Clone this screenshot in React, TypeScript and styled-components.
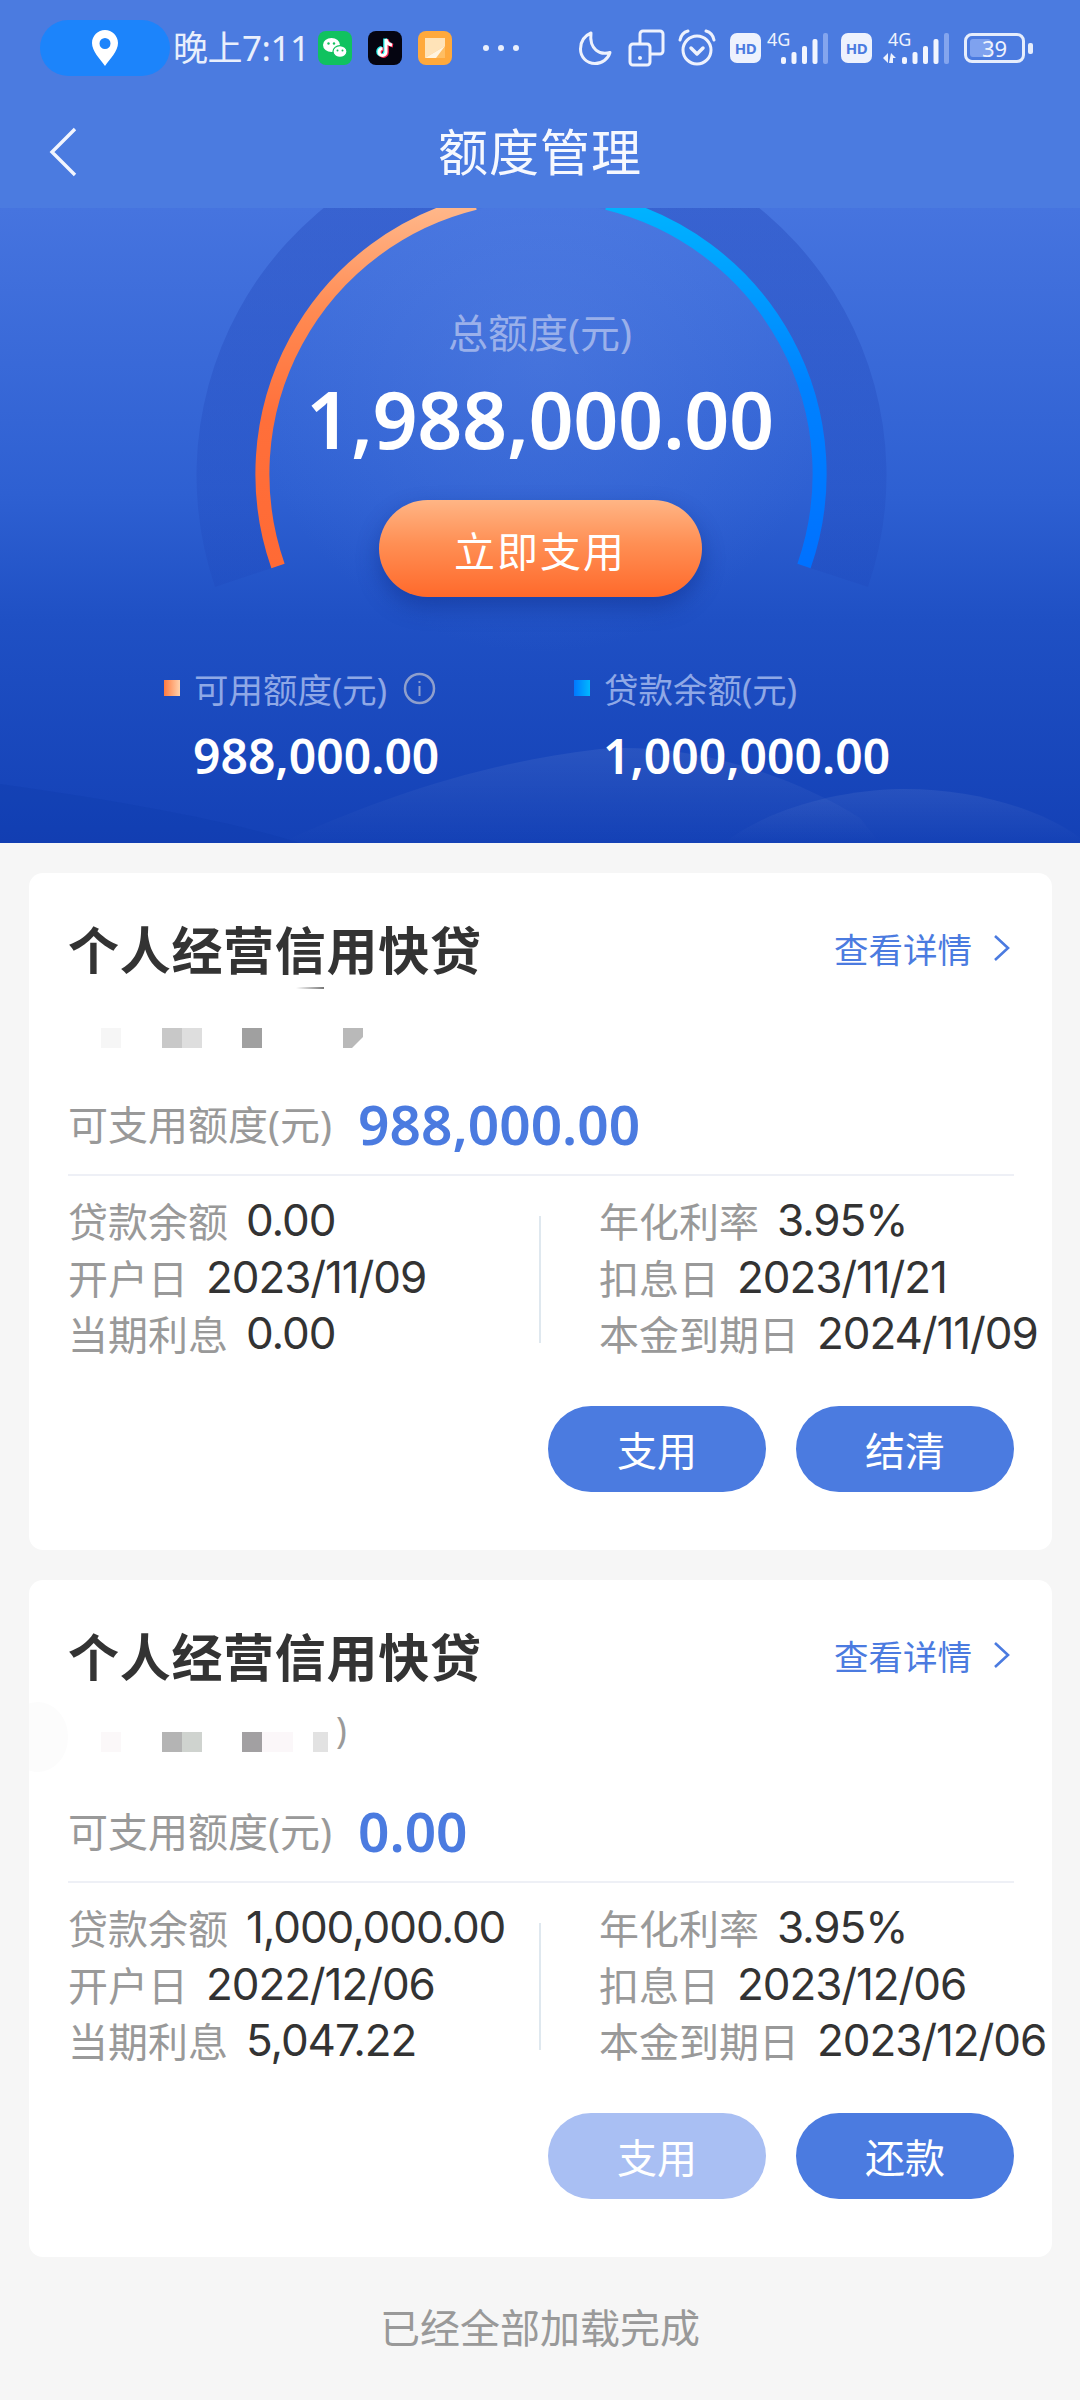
import React from 'react';
import styled, { createGlobalStyle } from 'styled-components';

const Global = createGlobalStyle`
	html, body {
		margin: 0;
		padding: 0;
		background: #f6f6f6;
	}
	body {
		font-family: "Noto Sans", "Noto Sans CJK SC", sans-serif;
	}
`;

const Page = styled.div`
	width: 1080px;
	min-height: 2400px;
	background: #f6f6f6;
	overflow: hidden;
`;

const Header = styled.header`
	height: 208px;
	background: #4b7be0;
	position: relative;
	z-index: 1;
`;

const StatusBar = styled.div`
	height: 96px;
	padding: 20px 47px 20px 40px;
	box-sizing: border-box;
	display: flex;
	align-items: center;
`;

const LocationPill = styled.div`
	width: 130px;
	height: 56px;
	border-radius: 28px;
	background: #1c84fb;
	display: flex;
	align-items: center;
	justify-content: center;
	margin-right: 3px;
`;

const Time = styled.span`
	width: 145px;
	font-size: 35px;
	line-height: 56px;
	color: #e9effc;
	white-space: nowrap;
	letter-spacing: -0.5px;
`;

const AppIcon = styled.svg`
	width: 34px;
	height: 34px;
	margin-right: 16px;
	flex: none;
`;

const Dots = styled.svg`
	width: 40px;
	height: 10px;
	margin-left: 13px;
`;

const StatusRight = styled.div`
	margin-left: auto;
	display: flex;
	align-items: center;
`;

const StatusIcon = styled.svg<{ $gap: number }>`
	flex: none;
	margin-right: ${(p) => p.$gap}px;
`;

const SignalIcon = styled.svg<{ $gap: number }>`
	flex: none;
	margin-top: -6px;
	margin-right: ${(p) => p.$gap}px;
`;

const HdBadge = styled.span`
	width: 31px;
	height: 30px;
	border-radius: 7px;
	background: #eef2fd;
	color: #4b7be0;
	font-size: 15px;
	font-weight: 700;
	display: flex;
	align-items: center;
	justify-content: center;
	letter-spacing: -0.5px;
	margin-right: 5px;
`;

const Battery = styled.div`
	width: 61px;
	height: 30px;
	border: 3px solid #e6edfc;
	border-radius: 8px;
	box-sizing: border-box;
	position: relative;
	display: flex;
	align-items: center;
	justify-content: center;
	color: #eef2fd;
	font-size: 22px;
	line-height: 24px;
	margin-right: 3px;
	&::before {
		content: '';
		position: absolute;
		left: 3px;
		top: 3px;
		bottom: 3px;
		width: 21px;
		border-radius: 3px;
		background: #7fa2ef;
	}
`;

const BatteryText = styled.span`
	position: relative;
`;

const BatteryNub = styled.i`
	width: 5px;
	height: 11px;
	border-radius: 2px;
	background: #e6edfc;
`;

const NavBar = styled.div`
	height: 112px;
	display: grid;
	grid-template-columns: 1fr auto 1fr;
	align-items: center;
	padding-left: 49px;
`;

const NavTitle = styled.h1`
	margin: 0 0 0 -49px;
	font-size: 50px;
	font-weight: 400;
	line-height: 60px;
	color: #f6f8fe;
	letter-spacing: 1px;
`;

const Hero = styled.section`
	height: 635px;
	position: relative;
	overflow: hidden;
	background: linear-gradient(180deg, #4674df 0%, #2e60d2 45%, #1f50c4 65%, #1441b6 100%);
	padding-top: 100px;
	box-sizing: border-box;
`;

const GaugeArt = styled.svg`
	position: absolute;
	left: 0;
	top: 0;
`;

const HeroBody = styled.div`
	position: relative;
	display: flex;
	flex-direction: column;
	align-items: center;
`;

const TotalLabel = styled.div`
	font-size: 40px;
	line-height: 50px;
	color: #9ab0ea;
`;

const TotalAmount = styled.div`
	margin-top: 16px;
	font-size: 79px;
	font-weight: 600;
	line-height: 90px;
	color: #fff;
	letter-spacing: -0.4px;
`;

const UseButton = styled.div`
	margin-top: 36px;
	width: 323px;
	height: 97px;
	border-radius: 49px;
	background: linear-gradient(180deg, #ffb585 0%, #ff8f54 45%, #ff692b 100%);
	box-shadow: 0 10px 22px rgba(12, 40, 130, 0.45);
	color: #fff;
	font-size: 41px;
	letter-spacing: 2px;
	display: flex;
	align-items: center;
	justify-content: center;
`;

const Legend = styled.div`
	align-self: stretch;
	margin-top: 69px;
	padding-left: 164px;
	display: grid;
	grid-template-columns: 410px 1fr;
`;

const LegendItem = styled.div`
	display: flex;
	flex-direction: column;
`;

const LegendHead = styled.div`
	display: flex;
	align-items: center;
	height: 44px;
	font-size: 34.500px;
	color: #8fa8e6;
`;

const LegendSwatch = styled.i<{ $from: string; $to: string }>`
	width: 16px;
	height: 16px;
	margin-right: 14px;
	background: linear-gradient(90deg, ${(p) => p.$from}, ${(p) => p.$to});
`;

const InfoIcon = styled.svg`
	margin-left: 16px;
`;

const LegendValue = styled.div`
	margin-top: 16px;
	padding-left: 29px;
	font-size: 48px;
	font-weight: 600;
	line-height: 60px;
	color: #fff;
`;

const CardList = styled.main`
	padding: 30px 28px 0 29px;
	display: flex;
	flex-direction: column;
	gap: 30px;
`;

const Card = styled.article`
	background: #fff;
	border-radius: 14px;
	padding: 45px 38px 58px 39px;
	overflow: hidden;
`;

const CardHead = styled.div`
	display: flex;
	align-items: center;
	justify-content: space-between;
	height: 60px;
`;

const CardTitle = styled.h2`
	margin: 0;
	font-size: 51px;
	font-weight: 700;
	color: #333;
	letter-spacing: 0.7px;
`;

const DetailLink = styled.a`
	display: flex;
	align-items: center;
	gap: 21px;
	padding-right: 3px;
	font-size: 34.500px;
	color: #4b7be0;
`;

const Mosaic = styled.div<{ $lift?: boolean }>`
	position: relative;
	margin-top: 50px;
	height: 20px;
	display: flex;
	${(p) => (p.$lift ? 'transform: translateY(-3px);' : '')}
`;

const Patch = styled.i<{ $w: number; $left: number; $bg: string; $notch?: boolean }>`
	width: ${(p) => p.$w}px;
	height: 20px;
	margin-left: ${(p) => p.$left}px;
	background: ${(p) => p.$bg};
	${(p) => (p.$notch ? 'clip-path: polygon(0 0, 100% 0, 100% 45%, 45% 100%, 0 100%);' : '')}
`;

const MosaicSliver = styled.i`
	position: absolute;
	left: 228px;
	top: -41px;
	width: 28px;
	height: 2px;
	background: linear-gradient(90deg, #fff, #777);
`;

const MosaicSmudge = styled.i`
	position: absolute;
	left: -60px;
	top: -30px;
	width: 60px;
	height: 70px;
	border-radius: 50%;
	background: #fcfcfc;
`;

const MosaicParen = styled.span`
	position: absolute;
	left: 268px;
	top: -24px;
	font-size: 36px;
	line-height: 44px;
	color: #9a9a9a;
`;

const LimitRow = styled.div`
	margin-top: 45px;
	height: 60px;
	display: flex;
	align-items: center;
	gap: 26px;
`;

const LimitLabel = styled.span`
	font-size: 40px;
	color: #999;
`;

const LimitValue = styled.span`
	font-size: 55px;
	font-weight: 600;
	color: #4b7be0;
`;

const Divider = styled.div`
	margin-top: 21px;
	height: 2px;
	background: #eef0f6;
`;

const InfoGrid = styled.div`
	margin-top: 16px;
	display: flex;
	height: 170px;
`;

const InfoColumn = styled.div<{ $width: number }>`
	width: ${(p) => p.$width}px;
	flex: none;
	white-space: nowrap;
`;

const VRule = styled.div`
	width: 2px;
	height: 127px;
	margin: 24px 58px 0 0;
	background: #dfe8ef;
	flex: none;
`;

const InfoRow = styled.div`
	height: 56.500px;
	display: flex;
	align-items: center;
	gap: 18px;
`;

const InfoLabel = styled.span`
	font-size: 40px;
	color: #999;
`;

const InfoValue = styled.span`
	font-family: Inter, "Noto Sans", sans-serif;
	font-size: 44px;
	letter-spacing: -1.100px;
	color: #333;
`;

const ActionRow = styled.div`
	margin-top: 44px;
	display: flex;
	justify-content: flex-end;
	gap: 30px;
`;

const ActionButton = styled.div<{ $muted?: boolean }>`
	width: 218px;
	height: 86px;
	border-radius: 43px;
	background: ${(p) => (p.$muted ? '#a9bff3' : '#4b7be0')};
	color: #fff;
	font-size: 40px;
	display: flex;
	align-items: center;
	justify-content: center;
`;

const Footer = styled.div`
	padding-top: 41px;
	font-size: 40px;
	line-height: 60px;
	color: #999;
	text-align: center;
`;

function Signal({ arrows }: { arrows?: boolean }) {
	const bars = [
		[0, 7],
		[10.5, 12],
		[21, 18],
		[31.5, 25],
		[42, 31],
	];
	return (
		<SignalIcon
			$gap={arrows ? 15 : 13}
			width={arrows ? 72 : 62}
			height={38}
			viewBox={arrows ? '-25 -6 72 38' : '-15 -6 62 38'}
		>
			<text x="-14" y="14" fontSize="18" fill="#eef2fd" fontFamily="Noto Sans">4G</text>
			{bars.map(([x, h], i) => (
				<rect key={x} x={x} y={32 - h} width="5" height={h} rx="2" fill={i === 4 ? '#84a5ee' : '#f2f5fe'} />
			))}
			{arrows && <path d="M-19 26l5-5v10zM-11 21l5 5h-3v5h-4z" fill="#eef2fd" />}
		</SignalIcon>
	);
}

interface LoanProps {
	limit: string;
	balance: string;
	openDate: string;
	interest: string;
	payDate: string;
	dueDate: string;
	action: string;
	muted?: boolean;
	second?: boolean;
}

function LoanCard({ limit, balance, openDate, interest, payDate, dueDate, action, muted, second }: LoanProps) {
	return (
		<Card>
			<CardHead>
				<CardTitle>个人经营信用快贷</CardTitle>
				<DetailLink>
					查看详情
					<svg width="18" height="28" viewBox="0 0 18 28" fill="none">
						<path d="M2 2l13 12L2 26" stroke="#4b7be0" strokeWidth="2.600" />
					</svg>
				</DetailLink>
			</CardHead>
			{second ? (
				<Mosaic $lift>
					<MosaicSmudge />
					<Patch $w={20} $left={33} $bg="#fbf8f9" />
					<Patch $w={20} $left={41} $bg="#b4b4b4" />
					<Patch $w={20} $left={0} $bg="#cfd3cf" />
					<Patch $w={20} $left={40} $bg="#a2a0a2" />
					<Patch $w={31} $left={0} $bg="#fbf7f9" />
					<Patch $w={15} $left={20} $bg="#e2e2e2" />
					<MosaicParen>)</MosaicParen>
				</Mosaic>
			) : (
				<Mosaic>
					<MosaicSliver />
					<Patch $w={20} $left={33} $bg="#f6f6f6" />
					<Patch $w={20} $left={41} $bg="#c8c8c8" />
					<Patch $w={20} $left={0} $bg="#dedede" />
					<Patch $w={20} $left={40} $bg="#a0a0a0" />
					<Patch $w={20} $left={81} $bg="#b9b9b9" $notch />
				</Mosaic>
			)}
			<LimitRow>
				<LimitLabel>可支用额度(元)</LimitLabel>
				<LimitValue>{limit}</LimitValue>
			</LimitRow>
			<Divider />
			<InfoGrid>
				<InfoColumn $width={471}>
					<InfoRow>
						<InfoLabel>贷款余额</InfoLabel>
						<InfoValue>{balance}</InfoValue>
					</InfoRow>
					<InfoRow>
						<InfoLabel>开户日</InfoLabel>
						<InfoValue>{openDate}</InfoValue>
					</InfoRow>
					<InfoRow>
						<InfoLabel>当期利息</InfoLabel>
						<InfoValue>{interest}</InfoValue>
					</InfoRow>
				</InfoColumn>
				<VRule />
				<InfoColumn $width={440}>
					<InfoRow>
						<InfoLabel>年化利率</InfoLabel>
						<InfoValue>3.95%</InfoValue>
					</InfoRow>
					<InfoRow>
						<InfoLabel>扣息日</InfoLabel>
						<InfoValue>{payDate}</InfoValue>
					</InfoRow>
					<InfoRow>
						<InfoLabel>本金到期日</InfoLabel>
						<InfoValue>{dueDate}</InfoValue>
					</InfoRow>
				</InfoColumn>
			</InfoGrid>
			<ActionRow>
				<ActionButton $muted={muted}>支用</ActionButton>
				<ActionButton>{action}</ActionButton>
			</ActionRow>
		</Card>
	);
}

function App() {
	return (
		<Page>
			<Global />
			<Header>
				<StatusBar>
					<LocationPill>
						<svg width="26" height="36" viewBox="0 0 26 36">
							<path
								fillRule="evenodd"
								d="M13 0C6 0 0 5.700 0 13c0 8 8 16 13 23 5-7 13-15 13-23C26 5.700 20 0 13 0zm0 8a5.500 5.500 0 110 11 5.500 5.500 0 010-11z"
								fill="#fff"
							/>
						</svg>
					</LocationPill>
					<Time>晚上7:11</Time>
					<AppIcon viewBox="0 0 34 34">
						<rect width="34" height="34" rx="8" fill="#10c25f" />
						<ellipse cx="13.500" cy="14" rx="8.500" ry="7" fill="#fff" />
						<ellipse cx="22" cy="20.500" rx="7" ry="5.800" fill="#fff" stroke="#10c25f" strokeWidth="1.200" />
						<circle cx="10.500" cy="12.500" r="1.200" fill="#10c25f" />
						<circle cx="16" cy="12.500" r="1.200" fill="#10c25f" />
						<circle cx="19.500" cy="19.500" r="1" fill="#10c25f" />
						<circle cx="24.500" cy="19.500" r="1" fill="#10c25f" />
					</AppIcon>
					<AppIcon viewBox="0 0 34 34">
						<rect width="34" height="34" rx="8" fill="#050511" />
						<path d="M18 8v13a3.500 3.500 0 11-3.500-3.500M18 8c.5 3.500 3 5.500 6 6" fill="none" stroke="#25f4ee" strokeWidth="3.600" transform="translate(-1 -.6)" />
						<path d="M18 8v13a3.500 3.500 0 11-3.500-3.500M18 8c.5 3.500 3 5.500 6 6" fill="none" stroke="#fe2c55" strokeWidth="3.600" transform="translate(1 .6)" />
						<path d="M18 8v13a3.500 3.500 0 11-3.500-3.500M18 8c.5 3.500 3 5.500 6 6" fill="none" stroke="#fff" strokeWidth="3" />
					</AppIcon>
					<AppIcon viewBox="0 0 34 34">
						<rect width="34" height="34" rx="8" fill="#ffa93c" />
						<path d="M7 7h20v12L14 27H7z" fill="#ffe3b8" />
						<path d="M7 27l20-12v12z" fill="#ffbe63" />
						<path d="M7 27l20-12-9 12z" fill="#fff4e0" />
					</AppIcon>
					<Dots viewBox="0 0 40 10">
						<circle cx="5" cy="5" r="3" fill="#e9effc" />
						<circle cx="20" cy="5" r="3" fill="#e9effc" />
						<circle cx="35" cy="5" r="3" fill="#e9effc" />
					</Dots>
					<StatusRight>
						<StatusIcon $gap={15} width={35} height={36} viewBox="0 0 35 36" fill="none">
							<path d="M13 3C6 6 2.500 12 2.500 19c0 8 6 14.500 14.500 14.500 7 0 13-4.500 15-11-10 3-21-3-19-19.500z" stroke="#eef2fd" strokeWidth="3" strokeLinejoin="round" />
						</StatusIcon>
						<StatusIcon $gap={13} width={37} height={38} viewBox="0 0 37 38" fill="none">
							<rect x="2" y="15" width="20" height="21" rx="3" stroke="#eef2fd" strokeWidth="3" />
							<path d="M12 15V5a3 3 0 013-3h17a3 3 0 013 3v17a3 3 0 01-3 3h-10" stroke="#eef2fd" strokeWidth="3" />
							<circle cx="12" cy="29" r="2" fill="#eef2fd" />
						</StatusIcon>
						<StatusIcon $gap={14} width={38} height={38} viewBox="0 0 38 38" fill="none">
							<circle cx="19" cy="21" r="14" stroke="#eef2fd" strokeWidth="3" />
							<path d="M2 11C3 6 6 3 10 2M36 11c-1-5-4-8-8-9" stroke="#eef2fd" strokeWidth="3" strokeLinecap="round" />
							<path d="M13 19l6 6 6-6" stroke="#eef2fd" strokeWidth="3.500" strokeLinecap="round" strokeLinejoin="round" />
						</StatusIcon>
						<HdBadge>HD</HdBadge>
						<Signal />
						<HdBadge>HD</HdBadge>
						<Signal arrows />
						<Battery>
							<BatteryText>39</BatteryText>
						</Battery>
						<BatteryNub />
					</StatusRight>
				</StatusBar>
				<NavBar>
					<svg width="28" height="50" viewBox="0 0 28 50" fill="none">
						<path d="M26 2L3 25l23 23" stroke="#f2f5fe" strokeWidth="3.400" />
					</svg>
					<NavTitle>额度管理</NavTitle>
				</NavBar>
			</Header>
			<Hero>
				<GaugeArt width="1080" height="635" viewBox="0 0 1080 635">
					<defs>
						<linearGradient id="ring" x1="0" y1="0" x2="0" y2="1">
							<stop offset="0" stopColor="#1a3cb0" stopOpacity=".34" />
							<stop offset="1" stopColor="#1a3cb0" stopOpacity=".16" />
						</linearGradient>
						<radialGradient id="glow" cx=".5" cy=".28" r=".55">
							<stop offset="0" stopColor="#5c86e4" stopOpacity=".35" />
							<stop offset="1" stopColor="#5c86e4" stopOpacity="0" />
						</radialGradient>
						<linearGradient id="arcLeft" x1="0" y1="0" x2="0" y2="1">
							<stop offset="0" stopColor="#ffb98c" />
							<stop offset=".3" stopColor="#ff8a52" />
							<stop offset=".6" stopColor="#ff6f3a" />
							<stop offset="1" stopColor="#ff6a35" />
						</linearGradient>
						<linearGradient id="arcRight" x1="0" y1="0" x2="0" y2="1">
							<stop offset="0" stopColor="#00b4ff" />
							<stop offset=".5" stopColor="#0082ff" />
							<stop offset="1" stopColor="#0071ff" />
						</linearGradient>
						<linearGradient id="wave" x1="0" y1="0" x2="0" y2="1">
							<stop offset="0" stopColor="#fff" stopOpacity=".07" />
							<stop offset="1" stopColor="#fff" stopOpacity="0" />
						</linearGradient>
					</defs>
					<path d="M215 379A345 345 0 1 1 868 379L804 358A279 279 0 1 0 278 358Z" fill="url(#ring)" />
					<circle cx="541" cy="266" r="272" fill="url(#glow)" />
					<path d="M278 358A279 279 0 0 1 475 -5" fill="none" stroke="url(#arcLeft)" strokeWidth="14" />
					<path d="M607 -5A279 279 0 0 1 804 358" fill="none" stroke="url(#arcRight)" strokeWidth="14" />
					<path d="M0 576C100 590 220 610 300 635H0Z" fill="#0d38a8" opacity=".25" />
					<path d="M280 635C380 590 480 555 600 541 680 535 780 560 860 610L880 635Z" fill="url(#wave)" />
					<path d="M725 634C770 600 840 582 900 581 970 580 1040 600 1080 630V635H725Z" fill="url(#wave)" />
				</GaugeArt>
				<HeroBody>
					<TotalLabel>总额度(元)</TotalLabel>
					<TotalAmount>1,988,000.00</TotalAmount>
					<UseButton>立即支用</UseButton>
					<Legend>
						<LegendItem>
							<LegendHead>
								<LegendSwatch $from="#ff7a3f" $to="#ffd2ac" />
								可用额度(元)
								<InfoIcon width="33" height="33" viewBox="0 0 33 33" fill="none">
									<circle cx="16.500" cy="16.500" r="14.500" stroke="#8f9fcc" strokeWidth="2.500" />
									<path d="M16.500 14v10M16.500 9v2" stroke="#8f9fcc" strokeWidth="2" />
								</InfoIcon>
							</LegendHead>
							<LegendValue>988,000.00</LegendValue>
						</LegendItem>
						<LegendItem>
							<LegendHead>
								<LegendSwatch $from="#0078ff" $to="#00b8ff" />
								贷款余额(元)
							</LegendHead>
							<LegendValue>1,000,000.00</LegendValue>
						</LegendItem>
					</Legend>
				</HeroBody>
			</Hero>
			<CardList>
				<LoanCard
					limit="988,000.00"
					balance="0.00"
					openDate="2023/11/09"
					interest="0.00"
					payDate="2023/11/21"
					dueDate="2024/11/09"
					action="结清"
				/>
				<LoanCard
					second
					muted
					limit="0.00"
					balance="1,000,000.00"
					openDate="2022/12/06"
					interest="5,047.22"
					payDate="2023/12/06"
					dueDate="2023/12/06"
					action="还款"
				/>
			</CardList>
			<Footer>已经全部加载完成</Footer>
		</Page>
	);
}

export default App;
